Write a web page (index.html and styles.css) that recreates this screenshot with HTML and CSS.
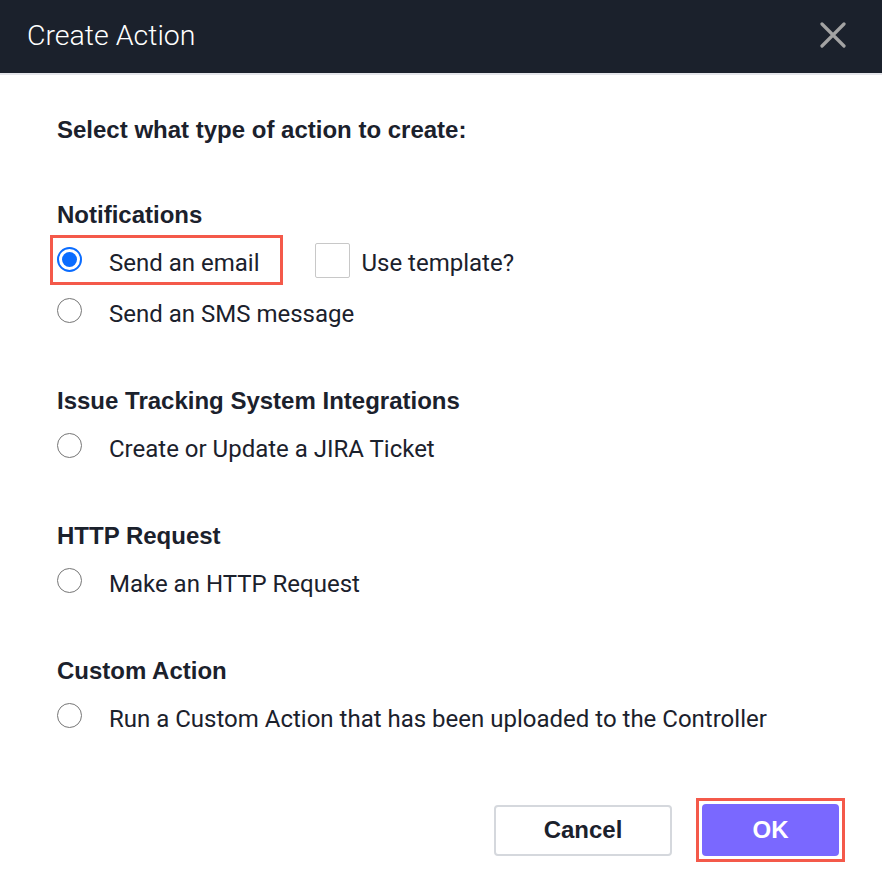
FILE: index.html
```html
<!DOCTYPE html>
<html>
<head>
<meta charset="utf-8">
<link rel="stylesheet" href="styles.css">
</head>
<body>
<div class="dialog">
  <header class="header">
    <h1 class="title">Create Action</h1>
    <button class="close" aria-label="Close">
      <svg width="26" height="26" viewBox="0 0 26 26"><path d="M2 2 L24 24 M24 2 L2 24" stroke="#a3a3a3" stroke-width="3.2" stroke-linecap="round" fill="none"/></svg>
    </button>
  </header>
  <main class="content">
    <h2 class="intro">Select what type of action to create:</h2>

    <section class="section">
      <h3 class="section-title">Notifications</h3>
      <div class="row">
        <label class="option highlight"><span class="radio checked"></span><span class="label">Send an email</span></label>
        <label class="check"><span class="box"></span><span class="label">Use template?</span></label>
      </div>
      <div class="row second">
        <label class="option"><span class="radio"></span><span class="label">Send an SMS message</span></label>
      </div>
    </section>

    <section class="section">
      <h3 class="section-title">Issue Tracking System Integrations</h3>
      <div class="row">
        <label class="option"><span class="radio"></span><span class="label">Create or Update a JIRA Ticket</span></label>
      </div>
    </section>

    <section class="section">
      <h3 class="section-title">HTTP Request</h3>
      <div class="row">
        <label class="option"><span class="radio"></span><span class="label">Make an HTTP Request</span></label>
      </div>
    </section>

    <section class="section">
      <h3 class="section-title">Custom Action</h3>
      <div class="row">
        <label class="option"><span class="radio"></span><span class="label">Run a Custom Action that has been uploaded to the Controller</span></label>
      </div>
    </section>
  </main>
  <footer class="footer">
    <button class="btn cancel">Cancel</button>
    <span class="ok-wrap"><button class="btn ok">OK</button></span>
  </footer>
</div>
</body>
</html>
```

FILE: styles.css
```css
* { box-sizing: border-box; }
html, body { margin: 0; padding: 0; background: #fff; }
body { width: 882px; height: 884px; overflow: hidden; color: #1b212c; }

.header {
  height: 75px;
  background: #1b212c;
  border-bottom: 2px solid #e4e5ea;
  display: flex;
  align-items: center;
  justify-content: space-between;
  padding: 0 36px 0 27px;
}
.title {
  margin: 0;
  font-family: Roboto, "Liberation Sans", sans-serif;
  font-weight: 300;
  font-size: 28.5px;
  color: #fff;
  padding-bottom: 3px;
}
.close {
  background: none;
  border: 0;
  padding: 0;
  width: 26px;
  height: 26px;
  display: flex;
  margin-bottom: 3px;
}

.content { padding: 43px 0 0 57px; }
.intro, .section-title {
  margin: 0;
  font-family: "Liberation Sans", Arial, sans-serif;
  font-weight: 700;
  font-size: 24px;
  line-height: 24px;
  color: #1b212c;
}
.intro { margin-bottom: 61px; }
.section { margin-bottom: 53px; }
.section-title { margin-bottom: 8px; }

.row {
  height: 50px;
  display: flex;
  align-items: center;
}
.row.second { margin-top: 1px; }
.option {
  display: flex;
  align-items: center;
  height: 50px;
}
.option.highlight {
  border: 3px solid #f4594a;
  margin-left: -7px;
  padding: 0 21px 0 4px;
}
.radio {
  width: 25px;
  height: 25px;
  border-radius: 50%;
  border: 1.5px solid #767676;
  margin-right: 27px;
  margin-bottom: 2px;
  flex: none;
  position: relative;
}
.radio.checked {
  border: 2px solid #0a6cff;
}
.radio.checked::after {
  content: "";
  position: absolute;
  left: 3px; top: 3px; right: 3px; bottom: 3px;
  border-radius: 50%;
  background: #0a6cff;
}
.label {
  font-family: Roboto, "Liberation Sans", sans-serif;
  font-size: 24px;
  color: #1b212c;
  padding-top: 6px;
}
.check {
  display: flex;
  align-items: center;
  margin-left: 32px;
}
.box {
  width: 35px;
  height: 35px;
  border: 1.5px solid #c8c8c8;
  border-radius: 2px;
  margin-right: 11px;
  flex: none;
}

.footer {
  position: absolute;
  left: 0; right: 0;
  top: 798px;
  display: flex;
  justify-content: flex-end;
  align-items: center;
  gap: 24px;
  padding-right: 37px;
}
.btn {
  font-family: "Liberation Sans", Arial, sans-serif;
  font-weight: 700;
  font-size: 24px;
  border-radius: 4px;
  cursor: pointer;
}
.cancel {
  width: 178px;
  height: 51px;
  background: #fff;
  border: 2px solid #d5d8dd;
  color: #1b212c;
}
.ok-wrap {
  display: inline-flex;
  border: 3px solid #f4594a;
  padding: 3px;
}
.ok {
  width: 137px;
  height: 52px;
  background: #7a68ff;
  border: 0;
  color: #fff;
}
```
